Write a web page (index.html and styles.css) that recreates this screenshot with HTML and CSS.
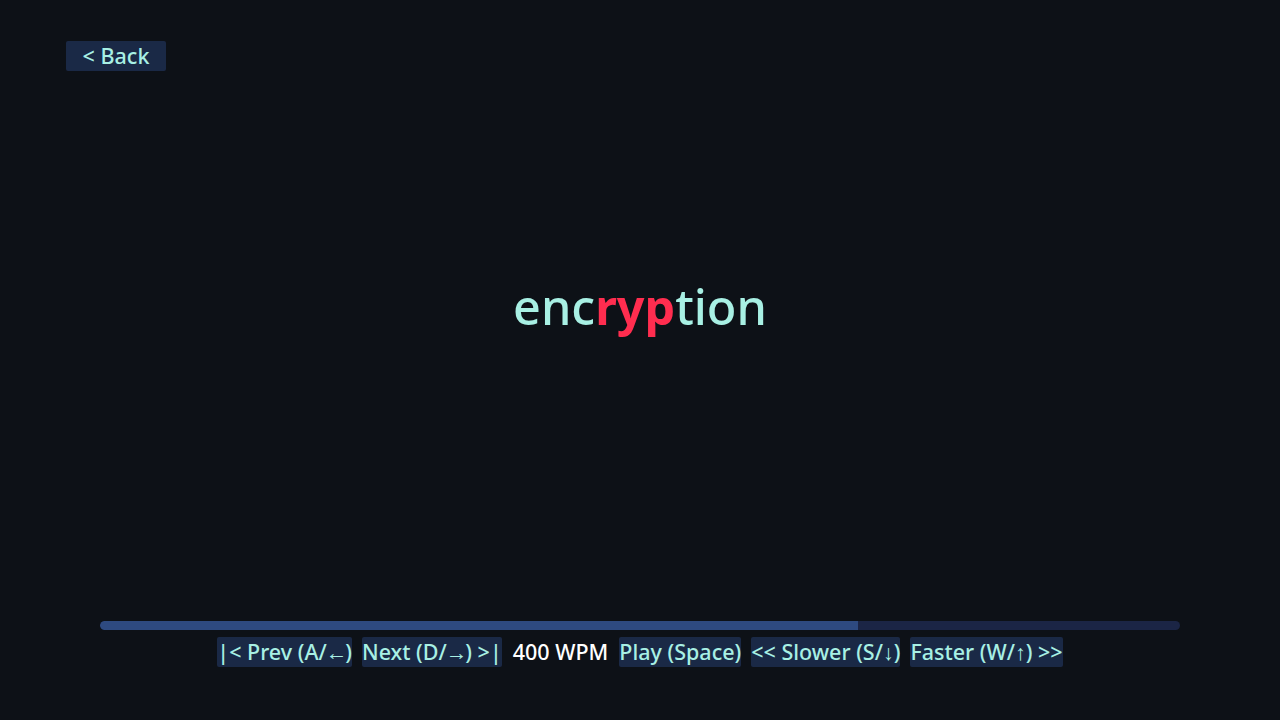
FILE: index.html
```html
<!DOCTYPE html>
<html lang="en">
<head>
<meta charset="utf-8">
<title>Reader</title>
<link rel="stylesheet" href="styles.css">
</head>
<body>
<div class="app">
  <header class="top">
    <button class="btn back">&lt; Back</button>
  </header>
  <main class="stage">
    <div class="word"><span class="pre">enc</span><span class="focus">ryp</span><span class="post">tion</span></div>
  </main>
  <footer class="bottom">
    <div class="progress"><div class="fill" style="width:70.2%"></div></div>
    <div class="controls">
      <button class="btn">|&lt; Prev (A/<span class="arr">←</span>)</button>
      <button class="btn">Next (D/<span class="arr">→</span>) &gt;|</button>
      <span class="wpm">400 WPM</span>
      <button class="btn">Play (Space)</button>
      <button class="btn">&lt;&lt; Slower (S/↓)</button>
      <button class="btn">Faster (W/↑) &gt;&gt;</button>
    </div>
  </footer>
</div>
</body>
</html>
```
FILE: styles.css
```css
* { box-sizing: border-box; }
html, body { margin: 0; padding: 0; }
body {
  background: #0d1117;
  font-family: "Noto Sans", "Open Sans", sans-serif;
  font-weight: 500;
  color: #a8f0e4;
  width: 1280px;
  height: 720px;
  overflow: hidden;
}
.app {
  height: 720px;
  display: flex;
  flex-direction: column;
}
.top {
  padding: 41px 0 0 66px;
  height: 100px;
}
.btn {
  font-family: inherit;
  font-weight: 500;
  font-size: 21.5px;
  line-height: 30px;
  height: 30px;
  padding: 0;
  border: none;
  border-radius: 2px;
  background: #1a2946;
  color: #a8f0e4;
  cursor: pointer;
}
.arr {
  display: inline-block;
  margin: 0 -2px 0 -1px;
}
.back {
  width: 100px;
  padding: 0;
}
.stage {
  flex: 1;
  display: flex;
  align-items: center;
  justify-content: center;
  padding-bottom: 110px;
}
.word {
  font-size: 48.5px;
  font-weight: 500;
  letter-spacing: 0;
}
.focus {
  color: #ff2d4f;
  font-weight: 700;
}
.bottom {
  padding: 0 100px 53px;
}
.progress {
  height: 9px;
  border-radius: 5px;
  background: #1b2545;
  overflow: hidden;
}
.fill {
  height: 100%;
  background: #2e4a80;
  border-radius: 5px 0 0 5px;
}
.controls {
  margin-top: 7px;
  display: flex;
  justify-content: center;
  align-items: center;
  gap: 10px;
}
.wpm {
  color: #ffffff;
  font-size: 21.5px;
  line-height: 30px;
  padding: 0 1px;
}
```
